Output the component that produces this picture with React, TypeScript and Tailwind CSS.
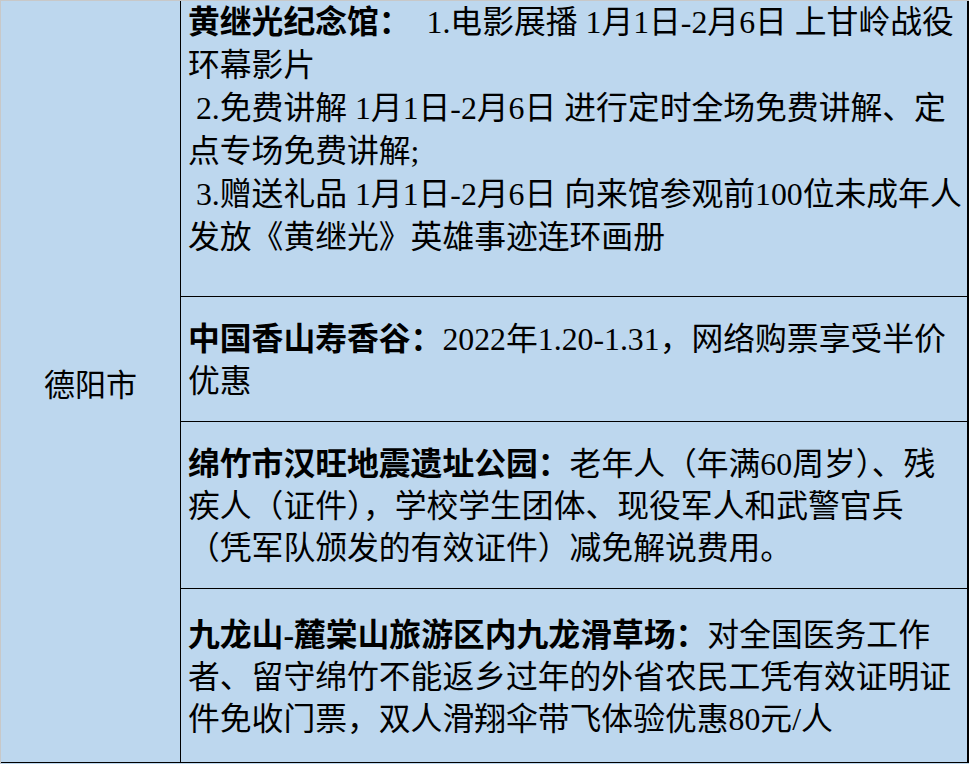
const serif = "font-['Liberation_Serif','Noto_Sans_CJK_SC',serif]";

type Line = { bold?: string; text: string };

const rows: { h: string; pt: string; leading: string; lines: Line[] }[] = [
  {
    h: "h-[296px]",
    pt: "pt-0",
    leading: "leading-[43px]",
    lines: [
      { bold: "黄继光纪念馆：", text: "  1.电影展播 1月1日-2月6日 上甘岭战役" },
      { text: "环幕影片" },
      { text: " 2.免费讲解 1月1日-2月6日 进行定时全场免费讲解、定" },
      { text: "点专场免费讲解;" },
      { text: " 3.赠送礼品 1月1日-2月6日 向来馆参观前100位未成年人" },
      { text: "发放《黄继光》英雄事迹连环画册" },
    ],
  },
  {
    h: "h-[125px]",
    pt: "pt-[22px]",
    leading: "leading-[42px]",
    lines: [
      { bold: "中国香山寿香谷：", text: "2022年1.20-1.31，网络购票享受半价" },
      { text: "优惠" },
    ],
  },
  {
    h: "h-[167px]",
    pt: "pt-[22px]",
    leading: "leading-[42px]",
    lines: [
      { bold: "绵竹市汉旺地震遗址公园：", text: "老年人（年满60周岁）、残" },
      { text: "疾人（证件），学校学生团体、现役军人和武警官兵" },
      { text: "（凭军队颁发的有效证件）减免解说费用。" },
    ],
  },
  {
    h: "flex-1",
    pt: "pt-[26px]",
    leading: "leading-[42px]",
    lines: [
      { bold: "九龙山-麓棠山旅游区内九龙滑草场：", text: "对全国医务工作" },
      { text: "者、留守绵竹不能返乡过年的外省农民工凭有效证明证" },
      { text: "件免收门票，双人滑翔伞带飞体验优惠80元/人" },
    ],
  },
];

export default function App() {
  return (
    <div className="w-[969px] h-[764px] bg-[#bdd7ee] border-t border-l border-[#c8c8c8] overflow-hidden text-black">
      <div className="flex h-[762px] border-b border-black">
        {/* City cell */}
        <div className="w-[180px] shrink-0 border-r border-black flex items-center justify-center pt-[3px]">
          <span className="font-['Noto_Sans_CJK_SC',sans-serif] text-[31px]">德阳市</span>
        </div>

        {/* Venues */}
        <div className="flex-1 flex flex-col border-r-2 border-black">
          {rows.map((row, i) => (
            <div
              key={i}
              className={`${row.h} ${row.pt} ${row.leading} ${i < rows.length - 1 ? "border-b border-black" : ""} pl-[7px] ${serif} text-[31.8px]`}
            >
              {row.lines.map((line, j) => (
                <div key={j} className="whitespace-pre">
                  {line.bold && <b className="font-bold">{line.bold}</b>}
                  {line.text}
                </div>
              ))}
            </div>
          ))}
        </div>
      </div>
    </div>
  );
}
